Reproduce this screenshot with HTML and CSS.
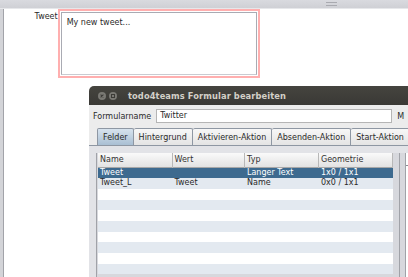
FILE: index.html
```html
<!DOCTYPE html>
<html lang="de">
<head>
    <meta charset="UTF-8">
    <title>todo4teams Formular bearbeiten</title>
    <link rel="stylesheet" href="styles.css">
</head>
<body>
    <!-- Preview frame -->
    <div class="topbar"><span class="grip"></span></div>
    <div class="page">
        <div class="frame-edge"></div>
        <div class="form">
            <div class="field">
                <label class="field-label">Tweet</label>
                <div class="tweet-box">
                    <div class="tweet-input">My new tweet...</div>
                </div>
            </div>
        </div>
    </div>

    <!-- Editor window -->
    <div class="dialog">
        <div class="title-bar">
            <span class="win-btn">
                <svg width="8" height="8" viewBox="0 0 8 8"><circle cx="4" cy="4" r="4" fill="#7a7974"/><path d="M2.6 2.6 L5.4 5.4 M5.4 2.6 L2.6 5.4" stroke="#3c3b37" stroke-width="1.1"/></svg>
            </span>
            <span class="win-btn">
                <svg width="8" height="8" viewBox="0 0 8 8"><circle cx="4" cy="4" r="4" fill="#7a7974"/><rect x="2.5" y="2.5" width="3" height="3" fill="none" stroke="#3c3b37" stroke-width="1"/></svg>
            </span>
            <span class="title-text">todo4teams Formular bearbeiten</span>
        </div>
        <div class="dialog-body">
            <div class="name-row">
                <span class="name-label">Formularname</span>
                <div class="name-input">Twitter</div>
                <span class="name-label">M</span>
            </div>
            <div class="tabs">
                <span class="tab active">Felder</span>
                <span class="tab">Hintergrund</span>
                <span class="tab">Aktivieren-Aktion</span>
                <span class="tab">Absenden-Aktion</span>
                <span class="tab">Start-Aktion</span>
            </div>
            <div class="tab-panel">
                <div class="scroll-pane">
                    <div class="grid">
                        <div class="grid-row head">
                            <span>Name</span><span>Wert</span><span>Typ</span><span>Geometrie</span>
                        </div>
                        <div class="grid-row selected">
                            <span>Tweet</span><span></span><span>Langer Text</span><span>1x0 / 1x1</span>
                        </div>
                        <div class="grid-row">
                            <span>Tweet_L</span><span>Tweet</span><span>Name</span><span>0x0 / 1x1</span>
                        </div>
                        <div class="grid-row"></div>
                        <div class="grid-row"></div>
                        <div class="grid-row"></div>
                        <div class="grid-row"></div>
                        <div class="grid-row"></div>
                        <div class="grid-row"></div>
                        <div class="grid-row"></div>
                        <div class="grid-row"></div>
                    </div>
                </div>
                <div class="split"></div>
                <div class="side-pane"><span class="side-mark"></span></div>
            </div>
        </div>
    </div>
</body>
</html>
```

FILE: styles.css
```css
body {
    margin: 0;
    width: 408px;
    height: 277px;
    overflow: hidden;
    position: relative;
    background: #fff;
    font-family: 'DejaVu Sans', Verdana, sans-serif;
    font-size: 8px;
    color: #2a2a2a;
}
.topbar {
    height: 9px;
    background: linear-gradient(#d9dadf, #cfd0d5);
    border-bottom: 1px solid #e6e7ea;
    box-sizing: border-box;
    display: flex;
    justify-content: flex-end;
    padding-right: 71px;
}
.grip {
    width: 11px;
    height: 2px;
    margin-top: 2px;
    border-top: 1px solid #a9aab0;
    border-bottom: 1px solid #a9aab0;
}
.page {
    display: flex;
    height: 268px;
}
.frame-edge {
    width: 3px;
    background: #d3d4d8;
    border-right: 1px solid #a2a3a9;
}
.form {
    flex: 1;
}
.field {
    display: flex;
    align-items: flex-start;
}
.field-label {
    width: 53.7px;
    text-align: right;
    padding-top: 3px;
    line-height: 10px;
}
.tweet-box {
    width: 196px;
    height: 63.4px;
    border: 2px solid #ffafaf;
    padding: 1px;
}
.tweet-input {
    height: 100%;
    box-sizing: border-box;
    border: 1px solid #a9abb3;
    border-bottom-color: #c9cbd1;
    padding: 5px 5px;
    line-height: 10px;
}

/* Editor window */
.dialog {
    position: absolute;
    left: 89px;
    top: 86px;
    width: 330px;
    height: 200px;
    display: flex;
    flex-direction: column;
}
.title-bar {
    height: 19px;
    background: linear-gradient(#45443f, #3a3935);
    border-radius: 5px 5px 0 0;
    display: flex;
    align-items: center;
    padding-left: 9px;
    gap: 3px;
}
.win-btn {
    display: flex;
}
.title-text {
    margin-left: 8px;
    font-weight: bold;
    font-size: 8.3px;
    color: #d3d0c8;
    letter-spacing: 0.1px;
}
.dialog-body {
    flex: 1;
    background: #ececec;
    display: flex;
    flex-direction: column;
}
.name-row {
    display: flex;
    align-items: center;
    height: 22px;
    padding-left: 4px;
    gap: 5px;
}
.name-input {
    width: 236px;
    height: 14px;
    box-sizing: border-box;
    background: #fff;
    border: 1px solid #b5b5b5;
    padding-left: 3px;
    line-height: 12px;
}
.tabs {
    display: flex;
    height: 17px;
    padding-left: 8px;
    margin-top: 1px;
    border-bottom: 1px solid #8e97a3;
}
.tab {
    box-sizing: border-box;
    height: 17px;
    padding: 3px 5px 0;
    line-height: 11px;
    background: linear-gradient(#f7f7f7, #e4e4e4);
    border: 1px solid #8e97a3;
    border-bottom: none;
    border-left: none;
    border-radius: 2px 2px 0 0;
}
.tab:first-child {
    border-left: 1px solid #8e97a3;
}
.tab.active {
    background: linear-gradient(#d7e3ee, #a9bfd3);
    padding-left: 5px;
    padding-right: 5px;
}
.tab-panel {
    flex: 1;
    display: flex;
    background: #e2e3e7;
    padding-top: 7px;
}
.scroll-pane {
    width: 301px;
    border-left: 1px solid #a0a2a8;
    border-right: 1px solid #a0a2a8;
    margin-left: 7px;
    background: #d7d8dd;
    padding-left: 1px;
}
.grid {
    width: 295px;
}
.grid-row {
    display: grid;
    grid-template-columns: 74.5px 72.5px 74px 1fr;
    height: 10.67px;
    line-height: 10.67px;
    background: #fff;
}
.grid-row:nth-child(odd) {
    background: #e3e9f0;
}
.grid-row span {
    padding-left: 2px;
    white-space: nowrap;
}
.grid-row.head {
    height: 14.7px;
    line-height: 14.7px;
    background: linear-gradient(#fafafa, #e2e2e2);
    border-bottom: 1px solid #a7a7a7;
    box-sizing: border-box;
    color: #333;
}
.grid-row.head span {
    border-right: 1px solid #b8b8b8;
}
.grid-row.selected {
    background: #3d6a8f;
    color: #fff;
}
.split {
    width: 5px;
    border-right: 1px solid #a0a2a8;
    background: #d7d8dd;
}
.side-pane {
    flex: 1;
    background: #fff;
}
.side-mark {
    display: block;
    width: 4px;
    height: 1px;
    margin-top: 12px;
    background: #8a8c92;
}
```
